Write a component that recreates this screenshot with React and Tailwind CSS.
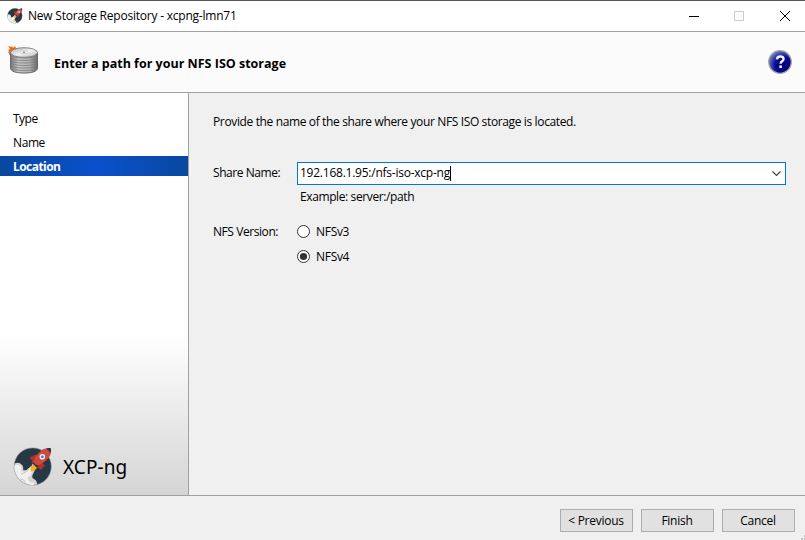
import React from "react";

function Rocket({ size, className = "" }) {
  return (
    <svg width={size} height={size} viewBox="0 0 40 40" className={`shrink-0 ${className}`}>
      <defs>
        <clipPath id={`disc${size}`}>
          <circle cx="19.7" cy="19.5" r="18.4" />
        </clipPath>
      </defs>
      <circle cx="19.7" cy="19.5" r="18.6" fill="#263943" stroke="#8d979b" strokeWidth=".6" />
      <g clipPath={`url(#disc${size})`}>
        <path d="M0 18q4-4 8-1 3 2 2 6 3 1 5-1l3-3 4 4-2 4q-2 4 1 5 4 2 3 8H0z" fill="#d4d4d4" />
        <path d="M0 20q4-4 7-1 2 2 1 5 3 2 6-1l4-3 2 2q-2 7-5 8-1 5 6 6v5H0z" fill="#f0f0f0" />
        <path d="M8 27q4-1 8-5M7 32q4 0 6 5" fill="none" stroke="#c8c8c8" strokeWidth="1.1" />
      </g>
      <path d="M19.5 16.5l4.5 4.5q-3 4-6.5 3.5-.5-4 2-8z" fill="#f1b32d" />
      <path d="M24 8q-3-1-4 1.5-3-.5-3 1.5 0 2 2.5 1.7-1.5 3 .5 3.3 2 0 4-3zM30 15l-4 3-2 2q1 1.5 2 .5 0 2.5 2 2 2 0 1.5-2.5 2 0 2-1.5t-1.5-1.5z" fill="#b92f2b" />
      <path d="M37.5 1.500Q33 1 30 2.300 24 6 20.500 14.300L22.300 17.500 25.700 18.200Q34 14 37.200 8.500 38.500 4.500 37.500 1.500Z" fill="#cf4841" />
      <path d="M33 1.500Q36 .8 38 1.300 38.400 4 37.300 6.500 35.800 3.300 33 1.500Z" fill="#293942" />
      <circle cx="29.3" cy="9.8" r="2.8" fill="#f0f4f5" />
      <circle cx="29.3" cy="9.8" r="1.5" fill="#3b91ac" />
    </svg>
  );
}

function DiscStack() {
  return (
    <svg width="32" height="32" viewBox="0 0 32 32" className="shrink-0">
      <defs>
        <linearGradient id="side">
          <stop stopColor="#777" />
          <stop offset=".3" stopColor="#c9c9c9" />
          <stop offset=".7" stopColor="#b4b4b4" />
          <stop offset="1" stopColor="#696969" />
        </linearGradient>
        <linearGradient id="top" x2="1" y2="1">
          <stop stopColor="#aaa" />
          <stop offset=".5" stopColor="#f3f3f3" />
          <stop offset="1" stopColor="#b9b9b9" />
        </linearGradient>
      </defs>
      <path d="M0 0l3 1 1-1 1 2 2-2 1 2-1 2 1 1-3 1 1 3-3-1-2 1 0-2-1 0 1-2-1-1 2-1z" fill="#f36a09" />
      <path d="M2.5 6.5v16c1 3 5 4.500 13.500 4.500s12.500-1.500 13.500-4.500v-16z" fill="url(#side)" stroke="#666" />
      {[9, 11.5, 14, 16.5, 19, 21.5].map((y) => (
        <path key={y} d={`M3 ${y}q1 3 13 3t13-3`} fill="none" stroke="#777" strokeWidth=".8" />
      ))}
      <ellipse cx="16" cy="6.5" rx="13.5" ry="4.8" fill="url(#top)" stroke="#777" strokeWidth=".9" />
      <ellipse cx="16" cy="6.3" rx="4" ry="1.4" fill="#f9f9f9" stroke="#bbb" strokeWidth=".6" />
      <ellipse cx="16" cy="6.3" rx="1.2" ry=".7" fill="#888" />
    </svg>
  );
}

function HelpIcon() {
  return (
    <svg width="24" height="24" viewBox="0 0 24 24" className="shrink-0">
      <defs>
        <radialGradient id="help" cx=".65" cy=".65" r=".75">
          <stop stopColor="#000078" />
          <stop offset=".5" stopColor="#080c8c" />
          <stop offset="1" stopColor="#8295dc" />
        </radialGradient>
      </defs>
      <circle cx="12" cy="12" r="11.3" fill="url(#help)" stroke="#a5a5a5" strokeWidth="1.2" />
      <path d="M8.9 9.300q.3-2.800 3.400-2.800 3.300 0 3.300 2.500 0 1.300-1.500 2.300-1.500 1-1.500 2.400" fill="none" stroke="#f4f4fa" strokeWidth="2.3" />
      <rect x="11.3" y="15.4" width="2.6" height="2.6" fill="#f4f4fa" />
    </svg>
  );
}

function Radio({ label, checked }) {
  return (
    <label className="flex h-[25px] items-center">
      <svg width="13" height="13" viewBox="0 0 13 13" className="mr-[6px]">
        <circle cx="6.5" cy="6.5" r="6" fill="#fff" stroke="#333" />
        {checked && <circle cx="6.5" cy="6.5" r="3.6" fill="#333" />}
      </svg>
      <span className="tracking-[-0.3px]">{label}</span>
    </label>
  );
}

function Button({ children }) {
  return (
    <button className="flex h-[23px] w-[73px] items-center justify-center whitespace-nowrap border border-[#adadad] bg-[#e1e1e1] pr-[1px] tracking-[-0.25px]">
      {children}
    </button>
  );
}

export default function App() {
  return (
    <div className="flex h-[540px] w-[805px] flex-col overflow-hidden whitespace-nowrap border-t border-[#555] bg-[#f0f0f0] font-['Open_Sans',sans-serif] text-[12px] leading-[16px] text-black">
      <header className="flex h-[31px] shrink-0 items-center border-b border-[#a0a0a0] bg-white pl-[7px]">
        <Rocket size={16} />
        <h1 className="ml-[5px] tracking-[-0.22px]">New Storage Repository - xcpng-lmn71</h1>
        <svg width="102" height="12" viewBox="0 0 102 12" className="ml-auto mr-[14px]" fill="none" shapeRendering="crispEdges">
          <path d="M0 6.5h10" stroke="#000" />
          <rect x="45.5" y="1.5" width="9" height="9" stroke="#ccc" />
          <path d="M91 1l10 10m0-10l-10 10" stroke="#000" shapeRendering="auto" />
        </svg>
      </header>
      <section className="flex h-[61px] shrink-0 items-center border-b border-[#a0a0a0] bg-[#fbfbfb] pl-[8px] pr-[13px]">
        <DiscStack />
        <h2 className="ml-[14px] mt-[4px] text-[12.5px] font-bold">Enter a path for your NFS ISO storage</h2>
        <div className="ml-auto">
          <HelpIcon />
        </div>
      </section>
      <div className="flex h-[403px] shrink-0 border-b border-[#a0a0a0]">
        <aside className="flex w-[189px] shrink-0 flex-col border-r border-[#a0a0a0] bg-[linear-gradient(#fff_60%,#d5d5d5)] pt-[15px]">
          <nav className="flex flex-col gap-[4px]">
            <div className="flex h-[20px] items-center pl-[13px] pt-[2px] tracking-[-0.5px]">Type</div>
            <div className="flex h-[20px] items-center pl-[13px] pt-[2px] tracking-[-0.4px]">Name</div>
            <div className="flex h-[20px] items-center bg-[linear-gradient(90deg,#0848a0,#0a50cc_50%,#0848a0)] pl-[13px] pt-[2px] font-bold tracking-[-0.55px] text-white">Location</div>
          </nav>
          <div className="mb-[8px] mt-auto flex items-center pl-[13px]">
            <Rocket size={40} />
            <span className="ml-[10px] font-['Noto_Sans',sans-serif] text-[19px] leading-[24px] tracking-[0.1px]">XCP-ng</span>
          </div>
        </aside>
        <main className="grow pl-[24px] pt-[21px]">
          <p className="tracking-[-0.365px]">Provide the name of the share where your NFS ISO storage is located.</p>
          <div className="mt-[32px] flex h-[23px] items-center">
            <label className="mt-[-1px] w-[84px] tracking-[-0.45px]">Share Name:</label>
            <div className="flex h-[23px] w-[489px] items-center border border-[#0078d7] bg-white pl-[2px] pr-[4px]">
              <span className="mt-[-2px] tracking-[-0.24px]">192.168.1.95:/nfs-iso-xcp-ng</span>
              <span className="mt-[-1px] h-[15px] w-px bg-black" />
              <svg width="9" height="6" viewBox="0 0 9 6" className="ml-auto" fill="none">
                <path d="M.5.5l4 4 4-4" stroke="#444" strokeWidth="1.2" />
              </svg>
            </div>
          </div>
          <p className="ml-[87px] mt-[4px] tracking-[-0.39px]">Example: server:/path</p>
          <div className="mt-[14px] flex">
            <span className="mt-[5px] w-[84px] tracking-[-0.43px]">NFS Version:</span>
            <div>
              <Radio label="NFSv3" />
              <Radio label="NFSv4" checked />
            </div>
          </div>
        </main>
      </div>
      <footer className="flex grow justify-end gap-[8px] pr-[10px] pt-[13px]">
        <Button>&lt; Previous</Button>
        <Button>Finish</Button>
        <Button>Cancel</Button>
        <svg width="4" height="5" viewBox="0 0 4 5" className="-mr-[10px] ml-[-2px] self-end" fill="#bfbfbf">
          <path d="M3 0h1v2H3zM0 3h2v2H0zM3 3h1v2H3z" />
        </svg>
      </footer>
    </div>
  );
}
